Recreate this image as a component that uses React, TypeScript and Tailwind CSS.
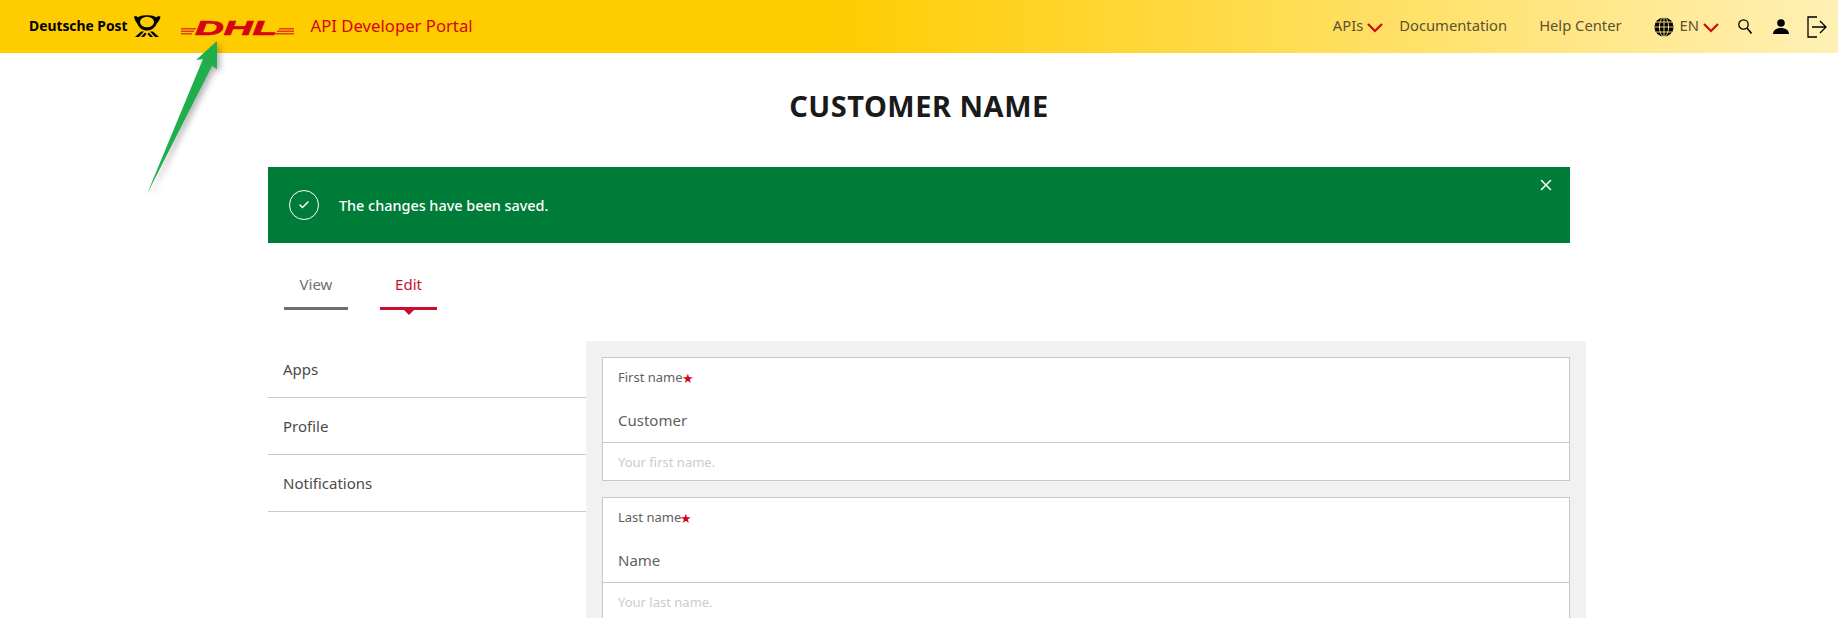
import { X, Check } from 'lucide-react'

const font = 'font-["Noto_Sans","Open_Sans",sans-serif]'

function PostHorn() {
  return (
    <svg width="28" height="23" viewBox="0 0 28 23" className="ml-[5px] shrink-0">
      <path d="M1 1.5 C3 1 4.5 1.5 5 2.5 C7 -0.5 21 -0.5 23 2.5 C24 1.5 26 1 27.5 1.5 C27 5 25 7 23.5 9 C22 13 18 15.5 14 15.5 C9.5 15.5 6 13 4.5 9 C3 7 1.5 5 1 1.5 Z" fill="#000" />
      <ellipse cx="14" cy="7" rx="7" ry="5.2" fill="#ffcc00" />
      <path d="M2 22 L8 16.5 L11 16.5 L6 22 Z M8 22 L12 17.5 L13.5 19 L11 22 Z M26 22 L20 16.5 L17 16.5 L22 22 Z M20 22 L16 17.5 L14.5 19 L17 22 Z" fill="#000" />
    </svg>
  )
}

function DhlLogo() {
  return (
    <svg width="113" height="26" viewBox="0 0 113 26" className="ml-5 shrink-0">
      <g fill="#d40511">
        <rect x="0" y="14" width="15" height="1.5" opacity="0.7" />
        <rect x="0" y="16.5" width="13" height="1.5" opacity="0.7" />
        <rect x="0" y="19" width="11" height="1.5" opacity="0.7" />
        <rect x="98" y="14" width="15" height="1.5" opacity="0.7" />
        <rect x="96" y="16.5" width="17" height="1.5" opacity="0.7" />
        <rect x="94" y="19" width="19" height="1.5" opacity="0.7" />
        <text x="14" y="21" stroke="#d40511" strokeWidth="0.7" fontFamily="Liberation Sans" fontWeight="700" fontStyle="italic" fontSize="21" textLength="82" lengthAdjust="spacingAndGlyphs">DHL</text>
      </g>
    </svg>
  )
}

// the wide red caret from the nav, lucide's chevron is too narrow
function Caret() {
  return (
    <svg width="16" height="10" viewBox="0 0 16 10" className="ml-1 mt-[3px] shrink-0">
      <path d="M1 1 L8 8 L15 1" fill="none" stroke="#d40511" strokeWidth="2.2" />
    </svg>
  )
}

function GlobeIcon() {
  return (
    <svg width="20" height="20" viewBox="0 0 20 20" className="ml-8 shrink-0">
      <circle cx="10" cy="10" r="9.6" fill="#000" />
      <g fill="none" stroke="#ffe680" strokeWidth="0.9">
        <ellipse cx="10" cy="10" rx="4.6" ry="9.6" />
        <path d="M10 0 V20 M0.4 10 H19.6 M2 5 H18 M2 15 H18" />
      </g>
    </svg>
  )
}

function SearchIcon() {
  return (
    <svg width="14" height="15" viewBox="0 0 14 15" className="ml-[19px] shrink-0">
      <circle cx="5.5" cy="5.5" r="4.7" fill="none" stroke="#000" strokeWidth="1.3" />
      <path d="M9 9 L13.5 14.5" stroke="#000" strokeWidth="1.6" />
    </svg>
  )
}

function UserIcon() {
  return (
    <svg width="16" height="15" viewBox="0 0 16 15" className="ml-[21px] shrink-0">
      <circle cx="8" cy="4" r="3.8" fill="#000" />
      <path d="M0 15 C0 11 4 9 8 9 C12 9 16 11 16 15 Z" fill="#000" />
    </svg>
  )
}

function ExitIcon() {
  return (
    <svg width="20" height="22" viewBox="0 0 20 22" className="ml-[18px] shrink-0">
      <path d="M10 1 H1 V21 H10" fill="none" stroke="#000" strokeWidth="1.3" />
      <path d="M5 11 H19 M13 5 L19 11 L13 17" fill="none" stroke="#000" strokeWidth="1.3" />
    </svg>
  )
}

function Field({ label, value, hint }: { label: string; value: string; hint: string }) {
  return (
    <div className="border border-[#c8c8c8] bg-white">
      <div className="h-[85px] border-b border-[#c8c8c8] pl-[15px] pt-[10px]">
        <div className="flex h-5 items-center text-[13px] text-[#5f5f5f]">
          {label}
          <span className="-ml-px text-[13px] leading-none text-[#d40511]">★</span>
        </div>
        <div className="mt-[22px] text-[15px] leading-5 text-[#5f5f5f]">{value}</div>
      </div>
      <div className="flex h-[37px] items-center pl-[15px] pt-[2px] text-[13px] text-[#cccccc]">{hint}</div>
    </div>
  )
}

export default function App() {
  return (
    <div className={`relative h-[618px] overflow-hidden bg-white ${font}`}>
      <header className="flex h-[53px] items-center bg-[linear-gradient(90deg,#ffcc00_0%,#ffcc00_45%,#fff0b5_100%)] pl-[29px] pr-[11px]">
        <span className="text-[13.85px] font-bold text-black">Deutsche Post</span>
        <PostHorn />
        <DhlLogo />
        <span className="ml-[17px] pb-[2px] text-[16.7px] text-[#d40511]">API Developer Portal</span>

        <nav className="ml-auto flex items-center text-[14.75px] text-[#5c5230]">
          <span className="pb-[2px]">APIs</span>
          <Caret />
          <span className="ml-4 pb-[2px]">Documentation</span>
          <span className="ml-8 pb-[2px]">Help Center</span>
          <GlobeIcon />
          <span className="ml-[6px] pb-[2px]">EN</span>
          <Caret />
          <SearchIcon />
          <UserIcon />
          <ExitIcon />
        </nav>
      </header>

      <main className="mx-auto w-[1302px]">
        <h1 className="mt-[33px] h-10 text-center text-[29px] font-bold leading-10 tracking-[0.5px] text-[#1a1a1a]">CUSTOMER NAME</h1>

        <div className="relative mt-[41px] flex h-[76px] items-center bg-[#007c39] pl-[21px] text-white">
          <span className="flex h-[30px] w-[30px] items-center justify-center rounded-full border border-white">
            <Check className="h-3 w-3" strokeWidth={3} />
          </span>
          <span className="ml-5 pt-[2px] text-[14.4px] font-medium">The changes have been saved.</span>
          <X className="absolute right-[15px] top-[9px] h-[18px] w-[18px]" strokeWidth={2} />
        </div>

        <div className="mt-[27px] flex pl-4 text-[15px]">
          <div className="flex h-[40px] w-[64px] items-start justify-center border-b-[3px] border-[#6f6f6f] pt-[3px] text-[#6f6f6f]">View</div>
          <div className="relative ml-8 flex h-[40px] w-[57px] items-start justify-center border-b-[3px] border-[#c8102e] pt-[3px] text-[#c8102e]">
            Edit
            <span className="absolute -bottom-[8px] left-1/2 -ml-[5px] h-0 w-0 border-x-[5px] border-t-[5px] border-x-transparent border-t-[#c8102e]" />
          </div>
        </div>

        <div className="mt-[31px] flex w-[1318px]">
          <aside className="w-[318px] shrink-0 text-[15px] text-[#4a4a4a]">
            {['Apps', 'Profile', 'Notifications'].map(item => (
              <div key={item} className="flex h-[57px] items-center border-b border-[#c8c8c8] pl-[15px]">{item}</div>
            ))}
          </aside>
          <section className="flex w-[1000px] flex-col gap-4 rounded-t-[2px] bg-[#f1f1f1] p-4">
            <Field label="First name" value="Customer" hint="Your first name." />
            <Field label="Last name" value="Name" hint="Your last name." />
          </section>
        </div>
      </main>

      {/* annotation arrow pasted on top of the screenshot */}
      <svg className="absolute left-0 top-0 drop-shadow-[3px_3px_3px_rgba(0,0,0,0.3)]" width="240" height="200" viewBox="0 0 240 200">
        <path d="M217 41 L217 69 L212 66 L147 194 L203 59 L196 60 Z" fill="#1fae4b" />
      </svg>
    </div>
  )
}
